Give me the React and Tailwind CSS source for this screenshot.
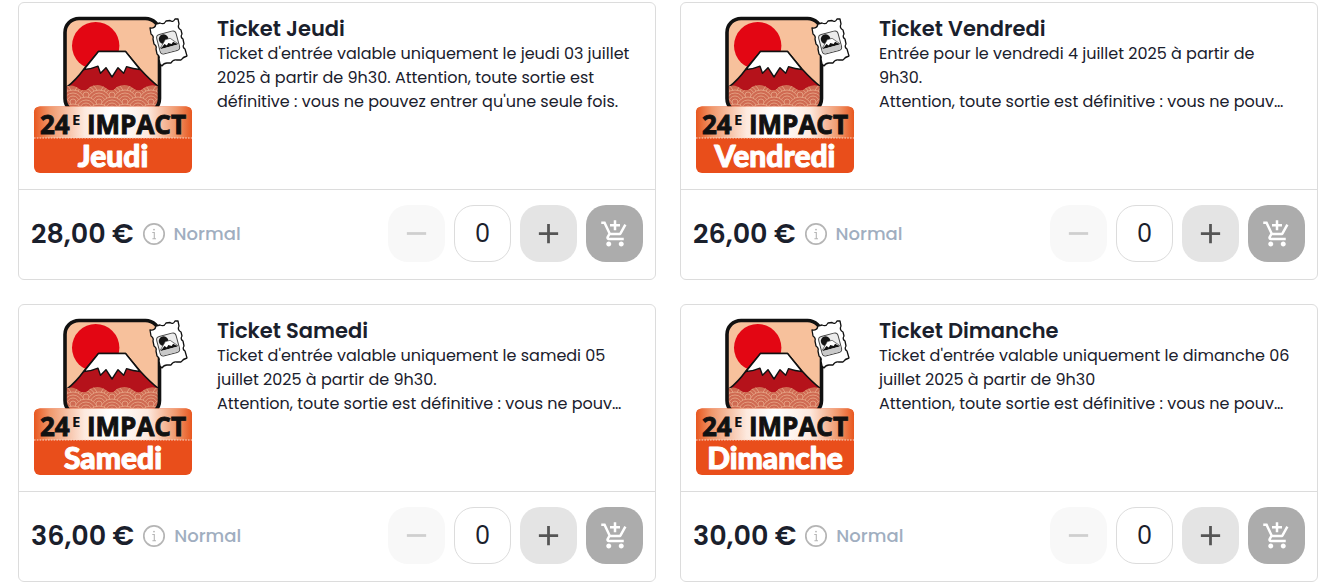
import { useState } from 'react'
import { MdAdd, MdAddShoppingCart, MdRemove } from 'react-icons/md'

const tickets = [
  {
    id: 'jeudi',
    day: 'Jeudi',
    price: '28,00 €',
    description:
      "Ticket d'entrée valable uniquement le jeudi 03 juillet\n2025 à partir de 9h30. Attention, toute sortie est\ndéfinitive : vous ne pouvez entrer qu'une seule fois.",
  },
  {
    id: 'vendredi',
    day: 'Vendredi',
    price: '26,00 €',
    description:
      'Entrée pour le vendredi 4 juillet 2025 à partir de\n9h30.\nAttention, toute sortie est définitive : vous ne pouv…',
  },
  {
    id: 'samedi',
    day: 'Samedi',
    price: '36,00 €',
    description:
      "Ticket d'entrée valable uniquement le samedi 05\njuillet 2025 à partir de 9h30.\nAttention, toute sortie est définitive : vous ne pouv…",
  },
  {
    id: 'dimanche',
    day: 'Dimanche',
    price: '30,00 €',
    description:
      "Ticket d'entrée valable uniquement le dimanche 06\njuillet 2025 à partir de 9h30\nAttention, toute sortie est définitive : vous ne pouv…",
  },
]

// Seigaiha scales, drawn row after row so each one covers the row above
const waves = [92, 99, 106, 113].flatMap((cy, row) =>
  [41, 67, 93, 119, 145, 171].map((cx) => [cx + (row % 2 ? -13 : 0), cy]),
)

function TicketLogo({ id, day }) {
  return (
    <svg viewBox="0 0 186 186" className="size-[186px] shrink-0" role="img" aria-label={`24e Impact ${day}`}>
      <defs>
        <linearGradient id={`band-${id}`}>
          <stop offset="0" stopColor="#e8571f" />
          <stop offset="0.1" stopColor="#f0986c" />
          <stop offset="0.32" stopColor="#fde9de" />
          <stop offset="0.5" stopColor="#ffffff" />
          <stop offset="0.72" stopColor="#fde9de" />
          <stop offset="0.9" stopColor="#f0986c" />
          <stop offset="1" stopColor="#e8571f" />
        </linearGradient>
        <clipPath id={`frame-${id}`}>
          <rect x="46" y="15" width="95" height="95" rx="14" />
        </clipPath>
        <clipPath id={`sea-${id}`}>
          <path d="M46 84 Q54 80 60 86 Q66 90 71 84 Q80 79 88 86 Q93 90 98 84 Q107 79 115 86 Q120 90 125 85 Q132 80 141 84 V106 H46 Z" />
        </clipPath>
      </defs>

      <g clipPath={`url(#frame-${id})`}>
        <rect x="46" y="15" width="95" height="95" fill="#f7c19c" />
        <circle cx="76.7" cy="42.7" r="23.7" fill="#e30613" />
        <path d="M48 84 Q57 77 65 66 L79.5 48.5 L106.5 48.5 L121 66 Q131 77 140 84 V92 H48 Z" fill="#b5121b" stroke="#111" strokeWidth="1.6" />
        <path
          d="M79.5 48.5 H106.5 L121 66.5 Q114 66 107.5 63.7 L104.7 70.3 L99 64.7 L93 74 L87 64.7 L81.5 70.3 L79 63.2 Q73 66 65 66.5 Z"
          fill="#fff"
          stroke="#111"
          strokeWidth="1.4"
          strokeLinejoin="round"
        />
        <g clipPath={`url(#sea-${id})`}>
          <rect x="46" y="78" width="95" height="30" fill="#cf6a52" />
          {waves.map(([cx, cy]) => (
            <g key={`${cx}-${cy}`} fill="#cf6a52" stroke="#e9ab8c" strokeWidth="0.8">
              <circle cx={cx} cy={cy} r="12" />
              <circle cx={cx} cy={cy} r="9" />
              <circle cx={cx} cy={cy} r="6" />
              <circle cx={cx} cy={cy} r="3" />
            </g>
          ))}
        </g>
      </g>
      <rect x="46" y="15.5" width="94.5" height="94" rx="14" fill="none" stroke="#111" strokeWidth="3.6" />

      <path
        d="M131 25 Q136 26 137 21 L141 20 Q145 22 147 18 L151 17.5 Q154 20 156 16 L159 16 L160 21 Q158 25 162 27 L163 31 Q161 34 164 36 L165 41 Q163 44 166 46 L168 53 Q164 54 162 57 L158 57 Q154 56 152 60 L148 60 Q145 60 143 63 L141 61 L140 56 Q141 53 138 51 L137 46 Q138 43 135 41 L134 36 Q135 33 132 31 Z"
        fill="#fff"
        stroke="#111"
        strokeWidth="1.3"
        strokeLinejoin="round"
      />
      <g transform="rotate(-15 149 39)">
        <rect x="139" y="29.5" width="20" height="20" rx="3.5" fill="#ececec" stroke="#444" strokeWidth="1" />
        <circle cx="145.5" cy="35" r="4.8" fill="#151515" />
        <path d="M140 43 L147 36 H152 L158 43 Z" fill="#fff" stroke="#333" strokeWidth="0.6" />
        <path d="M140 44 L145 40 L147 42 L149 40 L152 42 L154 40 L158 44 Z" fill="#111" />
        <path d="M139.5 44 H158.5 V46 Q158.5 49 155.5 49 H142.5 Q139.5 49 139.5 46 Z" fill="#c9c9c9" />
      </g>

      <rect x="15" y="103.5" width="158" height="66.5" rx="6" fill="#e94e1b" />
      <path d="M15 135 V109.5 Q15 103.5 21 103.5 H167 Q173 103.5 173 109.5 V135 Z" fill={`url(#band-${id})`} />
      <path d="M15 135 H173" stroke="#fbd8c8" strokeWidth="1" strokeDasharray="1.6 1.2" />
      <g fontFamily="'Open Sans', sans-serif" fontWeight="700" fill="#111" stroke="#111" strokeWidth="0.9">
        <text x="21" y="131" fontSize="26">24</text>
        <text x="53" y="122" fontSize="15" strokeWidth="0">E</text>
        <text x="167" y="131" fontSize="26" textAnchor="end">IMPACT</text>
      </g>
      <text
        x="94"
        y="164"
        fontFamily="Lato, sans-serif"
        fontWeight="900"
        fontSize="30"
        textAnchor="middle"
        fill="#fff"
        stroke="#fff"
        strokeWidth="1"
        strokeLinejoin="round"
      >
        {day}
      </text>
    </svg>
  )
}

function InfoIcon() {
  return (
    <svg viewBox="0 0 24 24" className="size-6 shrink-0 text-[#b5b5b5]" fill="none" stroke="currentColor" aria-hidden="true">
      <circle cx="12" cy="12" r="10.2" strokeWidth="1.7" />
      <path d="M10.3 10.5 H12.3 V16.6 M10.4 16.8 H14" strokeWidth="1.1" />
      <circle cx="12" cy="7.6" r="0.9" fill="currentColor" stroke="none" />
    </svg>
  )
}

function TicketCard({ ticket }) {
  const [quantity, setQuantity] = useState(0)

  return (
    <article className="rounded-md border border-[#dcdcdc] bg-white">
      <div className="flex gap-3 border-b border-[#dcdcdc] pr-3">
        <TicketLogo id={ticket.id} day={ticket.day} />
        <div className="min-w-0 flex-1 pt-3">
          <h2 className="text-[21px] leading-[27px] font-semibold">Ticket {ticket.day}</h2>
          <p className="text-base leading-6 whitespace-pre-line">{ticket.description}</p>
        </div>
      </div>

      <div className="flex items-center justify-between px-3 pt-[15px] pb-[17px]">
        <div className="flex items-center gap-2">
          <span className="text-[27px] leading-8 font-semibold whitespace-nowrap">{ticket.price}</span>
          <InfoIcon />
          <span className="text-lg font-medium text-[#a0aec0]">Normal</span>
        </div>

        <div className="flex items-center gap-[9px]">
          <button
            type="button"
            aria-label="Retirer un ticket"
            disabled={quantity === 0}
            onClick={() => setQuantity(quantity - 1)}
            className="flex size-[57px] items-center justify-center rounded-[20px] bg-[#e4e4e4] text-[#555] disabled:bg-[#f8f8f8] disabled:text-[#cfcfcf]"
          >
            <MdRemove className="size-[33px]" />
          </button>
          <input
            type="text"
            inputMode="numeric"
            aria-label={`Quantité Ticket ${ticket.day}`}
            value={quantity}
            onChange={(e) => setQuantity(Number(e.target.value.replace(/\D/g, '')))}
            className="size-[57px] rounded-[20px] border border-[#dcdcdc] text-center text-2xl"
          />
          <button
            type="button"
            aria-label="Ajouter un ticket"
            onClick={() => setQuantity(quantity + 1)}
            className="flex size-[57px] items-center justify-center rounded-[20px] bg-[#e4e4e4] text-[#555]"
          >
            <MdAdd className="size-[33px]" />
          </button>
          <button
            type="button"
            aria-label="Ajouter au panier"
            className="flex size-[57px] items-center justify-center rounded-[20px] bg-[#acacac] text-white"
          >
            <MdAddShoppingCart className="size-[30px]" />
          </button>
        </div>
      </div>
    </article>
  )
}

export default function App() {
  return (
    <main className="grid grid-cols-2 gap-6 bg-white pt-0.5 pr-[9px] pl-[18px] font-['Poppins','Inter',sans-serif] text-[#1a202c]">
      {tickets.map((ticket) => (
        <TicketCard key={ticket.id} ticket={ticket} />
      ))}
    </main>
  )
}
